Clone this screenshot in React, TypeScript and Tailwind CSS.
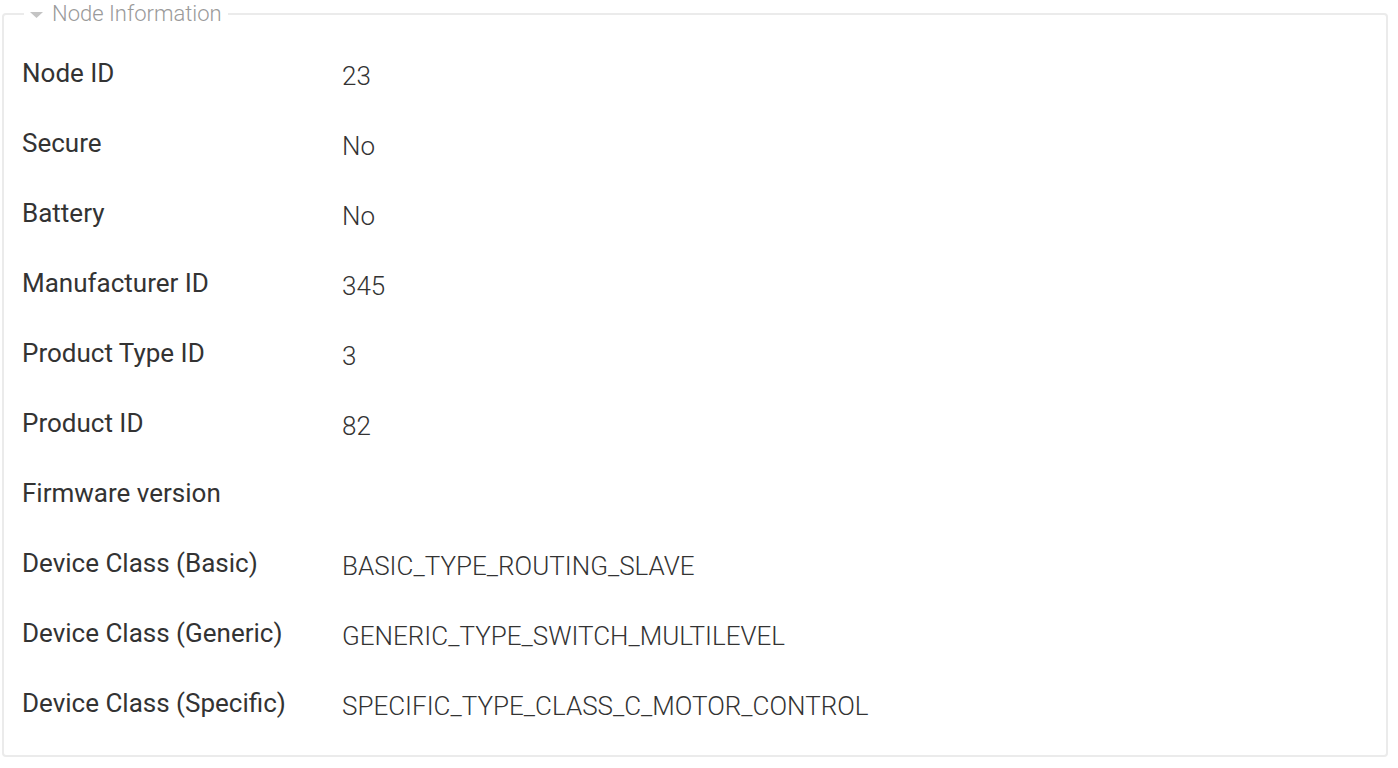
import React from 'react';

interface InfoRow {
  label: string;
  value: string;
}

const rows: InfoRow[] = [
  { label: 'Node ID', value: '23' },
  { label: 'Secure', value: 'No' },
  { label: 'Battery', value: 'No' },
  { label: 'Manufacturer ID', value: '345' },
  { label: 'Product Type ID', value: '3' },
  { label: 'Product ID', value: '82' },
  { label: 'Firmware version', value: '' },
  { label: 'Device Class (Basic)', value: 'BASIC_TYPE_ROUTING_SLAVE' },
  { label: 'Device Class (Generic)', value: 'GENERIC_TYPE_SWITCH_MULTILEVEL' },
  { label: 'Device Class (Specific)', value: 'SPECIFIC_TYPE_CLASS_C_MOTOR_CONTROL' },
];

export default function App() {
  return (
    <div className="min-h-screen bg-white font-['Roboto','Liberation_Sans',sans-serif] text-[#333]">
      <fieldset className="ml-[2px] w-[1386px] rounded-[4px] border-2 border-[#ebebeb] pl-[18px] pr-4 pt-[31px] pb-[38px]">
        <legend className="ml-[2px] flex items-center px-[6px] leading-[28px]">
          <svg width="13" height="6" viewBox="0 0 13 6" className="mr-[9px] mt-[2px]">
            <path d="M0 0 L13 0 L6.5 6 Z" fill="#c4c4c4" />
          </svg>
          <span className="text-[22px] font-light text-[#9a9a9a]">Node Information</span>
        </legend>

        <div className="flex flex-col gap-[42px]">
          {rows.map(row => (
            <div key={row.label} className="flex h-[28px] items-start">
              <div className="w-[320px] shrink-0 text-[26px] leading-[28px]">{row.label}</div>
              <div className="pt-[3px] text-[26px] font-light leading-[28px]">{row.value}</div>
            </div>
          ))}
        </div>
      </fieldset>
    </div>
  );
}
